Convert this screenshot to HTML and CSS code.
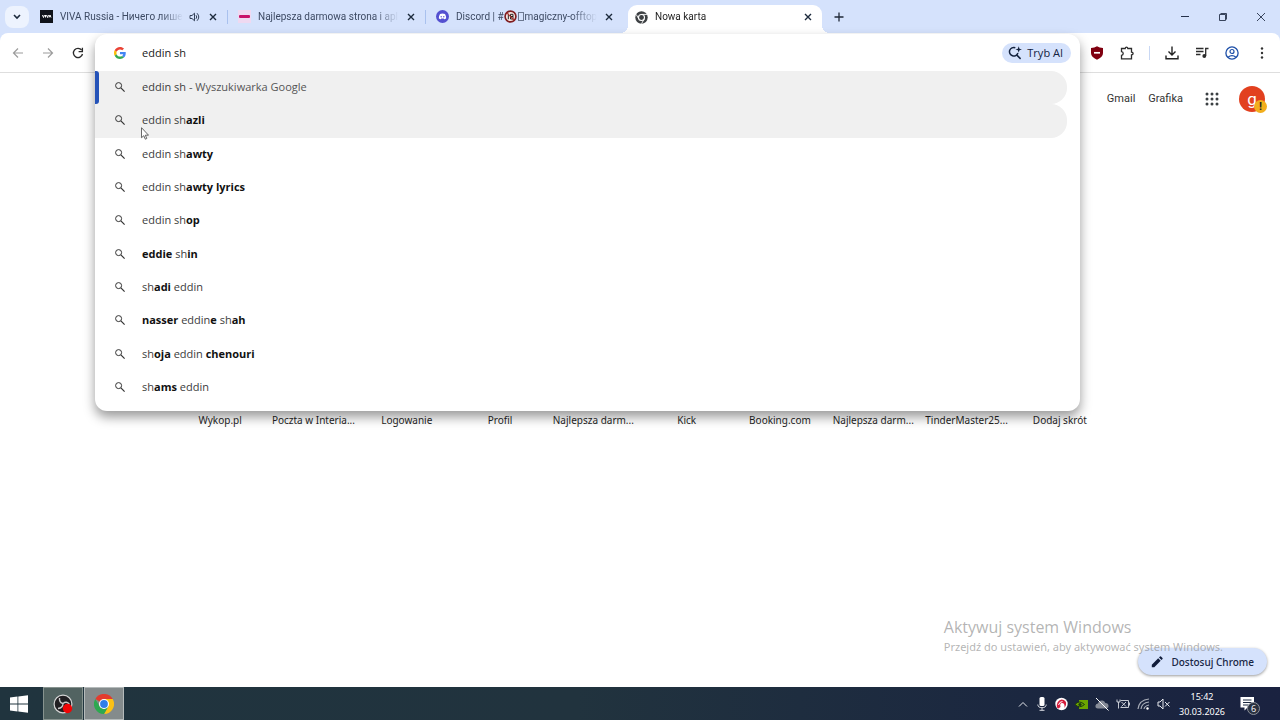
FILE: index.html
```html
<!DOCTYPE html>
<html lang="pl">
<head>
    <meta charset="UTF-8">
    <meta name="viewport" content="width=device-width, initial-scale=1.0">
    <title>Nowa karta</title>
    <link rel="stylesheet" href="styles.css">
</head>
<body>
    <svg class="defs" width="0" height="0">
        <symbol id="close" viewBox="0 0 8 8"><path d="M1 1l6 6M7 1L1 7" stroke="currentColor" stroke-width="1.4" fill="none"/></symbol>
        <symbol id="search" viewBox="0 0 12 12"><circle cx="4.6" cy="4.6" r="3" fill="none" stroke="#333" stroke-width="1"/><path d="M6.9 6.9L10.6 10.6" stroke="#333" stroke-width="1.2"/></symbol>
        <symbol id="chrome" viewBox="0 0 20 20">
            <path d="M10 10L1.3 5A10 10 0 0 1 18.7 5z" fill="#e33b2e"/>
            <path d="M10 5h8.7A10 10 0 0 1 10 20l4.3-7.5z" fill="#fbc116"/>
            <path d="M1.3 5l4.4 7.5 4.3 2.5L14.3 12.5 10 20A10 10 0 0 1 1.3 5z" fill="#2da94f"/>
            <circle cx="10" cy="10" r="5" fill="#fff"/>
            <circle cx="10" cy="10" r="3.9" fill="#2f7de9"/>
        </symbol>
    </svg>

    <header class="tab-strip">
        <button class="tab-search" aria-label="Szukaj kart">
            <svg width="8" height="6" viewBox="0 0 8 6"><path d="M1 1l3 3 3-3" fill="none" stroke="#1c2a3c" stroke-width="1.6"/></svg>
        </button>
        <div class="tab">
            <svg class="favicon" viewBox="0 0 13 13"><rect width="13" height="13" fill="#10131a"/><path d="M2.5 5l1 2.5 1-2.5M5.5 5v2.5M6.5 5l1 2.5 1-2.5M9 7.5l1-2.5 1 2.5" stroke="#fff" stroke-width="1" fill="none"/></svg>
            <span class="tab-title">VIVA Russia - Ничего лише</span>
            <svg class="sound" width="11" height="10" viewBox="0 0 11 10"><path d="M1 3.5h2L5.5 1.2v7.6L3 6.5H1z" fill="none" stroke="#34425a"/><path d="M7 3.2q1.5 1.8 0 3.6M8 1.2q3.5 3.8 0 7.6" fill="none" stroke="#34425a"/></svg>
            <button class="tab-close" aria-label="Zamknij"><svg width="8" height="8"><use href="#close"/></svg></button>
        </div>
        <div class="tab">
            <svg class="favicon" viewBox="0 0 13 13"><rect width="13" height="13" fill="#efd9f1"/><rect x="1" y="5" width="11" height="3" rx="1" fill="#c8126a"/></svg>
            <span class="tab-title">Najlepsza darmowa strona i apl</span>
            <button class="tab-close" aria-label="Zamknij"><svg width="8" height="8"><use href="#close"/></svg></button>
        </div>
        <div class="tab">
            <svg class="favicon" viewBox="0 0 13 13"><circle cx="6.5" cy="6.5" r="6.5" fill="#5450d0"/><path d="M4 4q2.5-.8 5 0 1.3 2.2 1.2 4.3-1 .9-1.9.9L7.7 8.5H5.3l-.6.7q-.9 0-1.9-.9Q2.7 6.2 4 4z" fill="#fff"/><circle cx="5.2" cy="6.7" r=".7" fill="#5450d0"/><circle cx="7.8" cy="6.7" r=".7" fill="#5450d0"/></svg>
            <span class="tab-title">Discord | #<svg class="emoji" width="13" height="13" viewBox="0 0 12 12"><circle cx="6" cy="6" r="5" fill="#f6e4e0" stroke="#7e1d20" stroke-width="1.5"/><path d="M4 3.5v5M6 4h2.3v2H6zM6 6h2.3v2.3H6z" fill="none" stroke="#222" stroke-width=".9"/><path d="M2.5 2.5l7 7" stroke="#b3302c"/></svg><span class="missing-glyph"></span>magiczny-offtop</span>
            <button class="tab-close" aria-label="Zamknij"><svg width="8" height="8"><use href="#close"/></svg></button>
        </div>
        <div class="tab active">
            <svg class="favicon" viewBox="0 0 13 13"><circle cx="6.5" cy="6.5" r="6.2" fill="#3d4043"/><circle cx="6.5" cy="6.5" r="3" fill="#3d4043" stroke="#fff" stroke-width="1.1"/><path d="M6.5 3.4H12M3.8 8L1.2 3.4M9.2 8L6.5 12.7" stroke="#fff" stroke-width=".9"/></svg>
            <span class="tab-title">Nowa karta</span>
            <button class="tab-close" aria-label="Zamknij"><svg width="8" height="8"><use href="#close"/></svg></button>
        </div>
        <button class="new-tab" aria-label="Nowa karta"><svg width="10" height="10" viewBox="0 0 10 10"><path d="M5 .5v9M.5 5h9" stroke="#1f2937" stroke-width="1.3"/></svg></button>
        <div class="window-buttons">
            <button aria-label="Minimalizuj"><svg width="10" height="10" viewBox="0 0 10 10"><path d="M1 4.5h8" stroke="#26324a"/></svg></button>
            <button aria-label="Maksymalizuj"><svg width="10" height="10" viewBox="0 0 10 10"><path d="M1.5 2.5h6v6h-6zM2.5 1.5h6v6" fill="none" stroke="#26324a" stroke-width=".9"/></svg></button>
            <button aria-label="Zamknij okno"><svg width="10" height="10" viewBox="0 0 10 10"><path d="M1 1l8 8M9 1L1 9" stroke="#26324a" stroke-width=".9"/></svg></button>
        </div>
    </header>

    <div class="toolbar">
        <nav class="nav-buttons">
            <button aria-label="Wstecz"><svg width="12" height="12" viewBox="0 0 12 12"><path d="M11 6H1.5M6 1.5L1.5 6 6 10.5" fill="none" stroke="#9c9c9c" stroke-width="1.2"/></svg></button>
            <button aria-label="Dalej"><svg width="12" height="12" viewBox="0 0 12 12"><path d="M1 6h9.5M6 1.5L10.5 6 6 10.5" fill="none" stroke="#9c9c9c" stroke-width="1.2"/></svg></button>
            <button aria-label="Odśwież"><svg width="12" height="12" viewBox="0 0 12 12"><path d="M9.7 3.2A4.6 4.6 0 1 0 10.5 7" fill="none" stroke="#2a2a2a" stroke-width="1.3"/><path d="M10.4.8v3.8H6.6" fill="none" stroke="#2a2a2a" stroke-width="1.3"/></svg></button>
        </nav>
        <div class="omnibox-slot">
            <div class="omnibox">
                <div class="address">
                    <svg width="12" height="12" viewBox="0 0 48 48"><path fill="#ea4335" d="M24 9.5c3.54 0 6.71 1.22 9.21 3.6l6.85-6.85C35.9 2.38 30.47 0 24 0 14.62 0 6.51 5.38 2.56 13.22l7.98 6.19C12.43 13.72 17.74 9.5 24 9.5z"/><path fill="#4285f4" d="M46.98 24.55c0-1.57-.15-3.09-.38-4.55H24v9.02h12.94c-.58 2.96-2.26 5.48-4.78 7.18l7.73 6c4.51-4.18 7.09-10.36 7.09-17.65z"/><path fill="#fbbc05" d="M10.53 28.59c-.48-1.45-.76-2.99-.76-4.59s.27-3.14.76-4.59l-7.98-6.19C.92 16.46 0 20.12 0 24c0 3.88.92 7.54 2.56 10.78l7.97-6.19z"/><path fill="#34a853" d="M24 48c6.48 0 11.93-2.13 15.89-5.81l-7.73-6c-2.15 1.45-4.92 2.3-8.16 2.3-6.26 0-11.57-4.22-13.47-9.91l-7.98 6.19C6.51 42.62 14.62 48 24 48z"/></svg>
                    <input class="query" type="text" value="eddin sh" aria-label="Pasek adresu i wyszukiwania">
                    <button class="ai-mode">
                        <svg width="14" height="14" viewBox="0 0 14 14"><path d="M7.3 1.7A4.3 4.3 0 1 0 9.9 7M8.6 8.9l4 4" fill="none" stroke="#14233f" stroke-width="1.5"/><path d="M10.7.3l.8 2.4 2.4.8-2.4.8-.8 2.4-.8-2.4-2.4-.8 2.4-.8z" fill="#14233f"/></svg>
                        Tryb AI
                    </button>
                </div>
                <ul class="suggestions">
                    <li class="selected"><svg width="12" height="12"><use href="#search"/></svg><span>eddin sh <i>- Wyszukiwarka Google</i></span></li>
                    <li class="hover"><svg width="12" height="12"><use href="#search"/></svg><span>eddin sh<b>azli</b></span></li>
                    <li><svg width="12" height="12"><use href="#search"/></svg><span>eddin sh<b>awty</b></span></li>
                    <li><svg width="12" height="12"><use href="#search"/></svg><span>eddin sh<b>awty lyrics</b></span></li>
                    <li><svg width="12" height="12"><use href="#search"/></svg><span>eddin sh<b>op</b></span></li>
                    <li><svg width="12" height="12"><use href="#search"/></svg><span><b>eddie</b> sh<b>in</b></span></li>
                    <li><svg width="12" height="12"><use href="#search"/></svg><span>sh<b>adi</b> eddin</span></li>
                    <li><svg width="12" height="12"><use href="#search"/></svg><span><b>nasser</b> eddin<b>e</b> sh<b>ah</b></span></li>
                    <li><svg width="12" height="12"><use href="#search"/></svg><span>sh<b>oja</b> eddin <b>chenouri</b></span></li>
                    <li><svg width="12" height="12"><use href="#search"/></svg><span>sh<b>ams</b> eddin</span></li>
                </ul>
            </div>
        </div>
        <div class="extensions">
            <button aria-label="uBlock"><svg width="14" height="14" viewBox="0 0 14 14"><path d="M7 .3q2.5 1.7 6 1.7v5q0 4-6 6.7Q1 11 1 7V2Q4.5 2 7 .3z" fill="#800010"/><path d="M4 6.8h6" stroke="#fff" stroke-width="1.7"/></svg></button>
            <button aria-label="Rozszerzenia"><svg width="14" height="14" viewBox="0 0 14 14"><path d="M1.5 2.5h3.7q.2-1.3 1.3-1.3t1.3 1.3h3.7v3.7q1.6.1 1.6 1.3t-1.6 1.3v4h-10V9.3q1.7-.2 1.7-1.8T1.5 5.7z" fill="none" stroke="#2c2c2c" stroke-width="1.3"/></svg></button>
            <span class="divider"></span>
            <button aria-label="Pobrane"><svg width="14" height="14" viewBox="0 0 14 14"><path d="M7 .5v8M3.5 5.5L7 9l3.5-3.5M1 9.5v3.3h12V9.5" fill="none" stroke="#222" stroke-width="1.4"/></svg></button>
            <button aria-label="Multimedia"><svg width="14" height="14" viewBox="0 0 14 14"><path d="M1 2.5h7.5M1 5.5h7.5M1 8.5h4.5M10.7 10V2.5h2.8" fill="none" stroke="#2c2c2c" stroke-width="1.3"/><circle cx="9.3" cy="10" r="1.9" fill="#2c2c2c"/></svg></button>
            <button aria-label="Profil"><svg width="14" height="14" viewBox="0 0 14 14"><circle cx="7" cy="7" r="6.1" fill="none" stroke="#1d4fa8" stroke-width="1.3"/><circle cx="7" cy="5.5" r="2" fill="none" stroke="#1d4fa8" stroke-width="1.2"/><path d="M3 11.2q4-3.3 8 0" fill="none" stroke="#1d4fa8" stroke-width="1.3"/></svg></button>
            <button aria-label="Menu"><svg width="14" height="14" viewBox="0 0 14 14"><g fill="#333"><circle cx="7" cy="2.5" r="1.2"/><circle cx="7" cy="7" r="1.2"/><circle cx="7" cy="11.5" r="1.2"/></g></svg></button>
        </div>
    </div>

    <main class="page">
        <div class="google-bar">
            <a href="#">Gmail</a>
            <a href="#">Grafika</a>
            <button class="apps" aria-label="Aplikacje Google"><svg width="14" height="14" viewBox="0 0 14 14"><g fill="#3c4043"><circle cx="2" cy="2" r="1.5"/><circle cx="7" cy="2" r="1.5"/><circle cx="12" cy="2" r="1.5"/><circle cx="2" cy="7" r="1.5"/><circle cx="7" cy="7" r="1.5"/><circle cx="12" cy="7" r="1.5"/><circle cx="2" cy="12" r="1.5"/><circle cx="7" cy="12" r="1.5"/><circle cx="12" cy="12" r="1.5"/></g></svg></button>
            <button class="avatar" aria-label="Konto Google">g<span class="warning">!</span></button>
        </div>
        <div class="shortcuts">
            <a href="#">Wykop.pl</a>
            <a href="#">Poczta w Interia...</a>
            <a href="#">Logowanie</a>
            <a href="#">Profil</a>
            <a href="#">Najlepsza darm...</a>
            <a href="#">Kick</a>
            <a href="#">Booking.com</a>
            <a href="#">Najlepsza darm...</a>
            <a href="#">TinderMaster25...</a>
            <a href="#">Dodaj skrót</a>
        </div>
        <button class="customize">
            <svg width="12" height="12" viewBox="0 0 12 12"><path d="M.8 11.2V8.7L7.2 2.3l2.5 2.5-6.4 6.4zM8 1.5L9 .5q.5-.4 1 0L11.5 2q.4.5 0 1l-1 1z" fill="#101c3a"/></svg>
            Dostosuj Chrome
        </button>
        <div class="activation">
            <p class="activation-title">Aktywuj system Windows</p>
            <p>Przejdź do ustawień, aby aktywować system Windows.</p>
        </div>
    </main>

    <footer class="taskbar">
        <button class="start" aria-label="Start"><svg width="18" height="18" viewBox="0 0 18 18"><path d="M0 2.6l7.5-1v7H0zM8.3 1.5L18 .2v8.4H8.3zM0 9.4h7.5v7L0 15.4zM8.3 9.4H18v8.4l-9.7-1.3z" fill="#fff"/></svg></button>
        <button class="app" aria-label="OBS"><svg width="20" height="20" viewBox="0 0 20 20"><circle cx="10" cy="10" r="8.9" fill="#211f22" stroke="#d4d4d4" stroke-width="1.2"/><path d="M10 9.5Q6 8.5 6.5 4M10 9.5q3.5-3 6.5 1M10 9.5Q10 14 5 14.5" fill="none" stroke="#c9c9c9" stroke-width="1.4"/><circle cx="14.5" cy="14.5" r="4.7" fill="#f00505"/></svg></button>
        <button class="app current" aria-label="Chrome"><svg width="20" height="20"><use href="#chrome"/></svg></button>
        <div class="tray">
            <svg width="12" height="14" viewBox="0 0 12 14"><path d="M2 9.5l4-4 4 4" fill="none" stroke="#e6e8ee"/></svg>
            <svg width="12" height="14" viewBox="0 0 12 14"><rect x="3.5" y="0" width="5" height="9" rx="1.5" fill="#fff"/><path d="M1.8 7.5q0 3.2 4.2 3.2t4.2-3.2M6 10.5v3M3.5 13.3h5" fill="none" stroke="#d5d8df"/></svg>
            <svg width="13" height="14" viewBox="0 0 13 14"><circle cx="6.5" cy="7" r="6.2" fill="#fff"/><path d="M2 10.5Q1 4 6.5 2.5 12 3 11 8l-1.5 3q.5-5-2.5-5-2.5 0-1.5 4l-2 1.5z" fill="#d51b3b"/><path d="M3.5 8q1-3.5 4-3.5" fill="none" stroke="#fff"/></svg>
            <svg width="13" height="14" viewBox="0 0 13 14"><path d="M4 3h9v9H4z" fill="#6ca500"/><path d="M0 7.5Q4 2.5 9.5 7.5 4.5 12 0 7.5z" fill="#6ca500" stroke="#1d3910"/><circle cx="5" cy="7.5" r="1.6" fill="#1d3910"/></svg>
            <svg width="14" height="14" viewBox="0 0 14 14"><path d="M3 11.5q-3-.2-2.5-3Q1 6.5 3 6.5 4 3 7.5 3.5q2 .3 2.8 2.5 3.2.2 3.2 3 0 2.5-3 2.5z" fill="#878c98"/><path d="M1 1l12.5 12.5" stroke="#fff"/></svg>
            <svg width="14" height="14" viewBox="0 0 14 14"><path d="M4.5 3.5h8v7h-8M13.5 5.5v3M1 2.5v2.5h3V2.5M2.5 5v6.5M5.5 5l4.5 4.5M10 5L5.5 9.5" fill="none" stroke="#d9dce3" stroke-width=".9"/></svg>
            <svg width="13" height="14" viewBox="0 0 13 14"><path d="M1 12Q2 3 12 2M4 12q.5-6 8-7M7 12q.5-3 5-4" fill="none" stroke="#a8adb8" stroke-width="1.2"/><circle cx="10.5" cy="11.5" r="1.2" fill="#fff"/></svg>
            <svg width="14" height="14" viewBox="0 0 14 14"><path d="M1 5h2l3-3v10L3 9H1zM8 5l4.5 4.5M12.5 5L8 9.5" fill="none" stroke="#e6e8ee"/></svg>
        </div>
        <time class="clock"><span>15:42</span><span>30.03.2026</span></time>
        <button class="notifications" aria-label="Powiadomienia">
            <svg width="15" height="15" viewBox="0 0 15 15"><path d="M.5 1h13.5v10.5H7.5L4.5 14.5v-3h-4z" fill="#fff"/><path d="M3 4h8.5M3 6.5h8.5M3 9h5" stroke="#1b2840"/></svg>
            <span class="count">6</span>
        </button>
    </footer>

    <svg class="cursor" width="8" height="13" viewBox="0 0 8 13"><path d="M.5.7v10l2.3-2 1.5 3.5 1.5-.7L4.3 8.2h3.2z" fill="#fff" stroke="#444" stroke-width=".8"/></svg>
</body>
</html>
```
FILE: styles.css
```css
* {
    box-sizing: border-box;
}
body {
    margin: 0;
    height: 100vh;
    display: flex;
    flex-direction: column;
    font-family: "Open Sans", "Noto Sans", sans-serif;
    font-size: 11px;
    line-height: 16px;
    color: #1f1f1f;
    background-color: #d5e2fc;
    overflow: hidden;
}
button {
    display: flex;
    align-items: center;
    justify-content: center;
    padding: 0;
    border: none;
    background: none;
    font: inherit;
    color: inherit;
    cursor: pointer;
}
a {
    color: inherit;
    text-decoration: none;
}
svg {
    display: block;
    flex: none;
}
.defs {
    position: absolute;
}

/* tabs */
.tab-strip {
    display: flex;
    height: 33px;
    padding-left: 5px;
}
.tab-search {
    width: 24px;
    height: 22px;
    margin: 6px 1px 0 0;
    border-radius: 8px;
    background-color: #edf3fe;
}
.tab {
    position: relative;
    display: flex;
    align-items: center;
    flex: 0 1 198px;
    min-width: 0;
    padding: 0 7px 0 10px;
    color: #3d4a63;
    font-family: Roboto, "Open Sans", sans-serif;
    font-size: 10px;
}
.tab:not(.active)::after {
    content: "";
    position: absolute;
    right: 0;
    width: 1px;
    height: 14px;
    background-color: #a9c1ee;
}
.tab:nth-child(4)::after {
    display: none;
}
.favicon {
    width: 13px;
    height: 13px;
    margin-right: 7px;
}
.tab-title {
    flex: 1;
    min-width: 0;
    overflow: hidden;
    white-space: nowrap;
    -webkit-mask-image: linear-gradient(to right, #000 82%, transparent);
    mask-image: linear-gradient(to right, #000 82%, transparent);
}
.emoji {
    display: inline-block;
    vertical-align: -3px;
}
.missing-glyph {
    display: inline-block;
    width: 6px;
    height: 9px;
    margin: 0 1px;
    border: 1px solid #6c7890;
    vertical-align: -1px;
}
.sound {
    margin: 0 5px 0 6px;
}
.tab-close {
    width: 16px;
    height: 16px;
    margin-left: 4px;
    color: #1c2a3c;
}
.sound + .tab-close {
    margin-left: 0;
}
.tab.active {
    margin: 5px 0 0 4px;
    flex-basis: 194px;
    padding: 0 6px 4px 7px;
    border-radius: 9px 9px 0 0;
    background-color: #fff;
    color: #1f1f1f;
}
.tab.active::before,
.tab.active::after {
    content: "";
    position: absolute;
    bottom: 0;
    width: 8px;
    height: 8px;
}
.tab.active::before {
    left: -8px;
    background: radial-gradient(circle at 0 0, transparent 8px, #fff 8px);
}
.tab.active::after {
    right: -8px;
    background: radial-gradient(circle at 100% 0, transparent 8px, #fff 8px);
}
.new-tab {
    width: 34px;
}
.window-buttons {
    display: flex;
    margin-left: auto;
}
.window-buttons button {
    width: 38px;
}

/* toolbar */
.toolbar {
    display: flex;
    height: 40px;
    background-color: #fff;
    border-bottom: 1px solid #dedede;
    border-radius: 8px 8px 0 0;
}
.nav-buttons {
    display: flex;
    align-items: center;
    width: 95px;
    padding: 0 2px 0 3px;
}
.nav-buttons button {
    width: 30px;
    height: 30px;
}
.omnibox-slot {
    position: relative;
    flex: 1;
}
.omnibox {
    position: absolute;
    top: 1px;
    left: 0;
    right: 0;
    z-index: 2;
    padding-bottom: 7px;
    border-radius: 12px;
    background-color: #fff;
    box-shadow: 0 6px 12px rgba(0, 0, 0, 0.4);
    overflow: hidden;
}
.address {
    display: flex;
    align-items: center;
    height: 37px;
    padding: 0 9px 0 19px;
}
.query {
    flex: 1;
    min-width: 0;
    margin-left: 16px;
    padding: 0;
    border: none;
    outline: none;
    background: none;
    font: inherit;
    color: #202020;
}
.ai-mode {
    gap: 5px;
    height: 20px;
    padding: 0 8px 0 6px;
    border-radius: 10px;
    background-color: #d5e2fc;
    color: #14233f;
    font-weight: 500;
}
.suggestions {
    display: grid;
    grid-auto-rows: 1fr;
    height: 333px;
    margin: 0;
    padding: 0 13px 0 0;
    list-style: none;
}
.suggestions li {
    position: relative;
    display: flex;
    align-items: center;
    gap: 16px;
    padding: 0 0 1px 19px;
    border-radius: 0 16px 16px 0;
    color: #3c3c3c;
}
.suggestions i {
    font-style: normal;
    color: #555;
}
.suggestions b {
    font-weight: 700;
    color: #111;
}
.suggestions .selected,
.suggestions .hover {
    background-color: #f0f0f0;
}
.suggestions .selected::before {
    content: "";
    position: absolute;
    left: 0;
    top: 0;
    bottom: 0;
    width: 4px;
    border-radius: 0 3px 3px 0;
    background-color: #2452b8;
}
.extensions {
    display: flex;
    align-items: center;
    width: 200px;
    padding-left: 2px;
}
.extensions button {
    width: 30px;
    height: 30px;
}
.divider {
    width: 1px;
    height: 14px;
    margin: 0 7px;
    background-color: #c9d8f4;
}

/* new tab page */
.page {
    position: relative;
    flex: 1;
    background-color: #fff;
}
.google-bar {
    display: flex;
    align-items: center;
    justify-content: flex-end;
    gap: 13px;
    padding: 13px 15px 0 0;
    font-family: Roboto, "Liberation Sans", sans-serif;
    color: #333;
}
.apps {
    width: 18px;
    height: 18px;
    margin: 0 5px 0 7px;
}
.avatar {
    position: relative;
    width: 26px;
    height: 26px;
    border-radius: 50%;
    background-color: #e2401f;
    color: #fff;
    font-size: 17px;
}
.warning {
    position: absolute;
    right: -2px;
    bottom: -1px;
    width: 13px;
    height: 13px;
    border-radius: 50%;
    background-color: #f2ae1c;
    color: #222;
    font-size: 11px;
    font-weight: 700;
    line-height: 13px;
}
.shortcuts {
    display: grid;
    grid-template-columns: repeat(10, 1fr);
    max-width: 933px;
    margin: 300px auto 0;
    font-family: "Noto Sans", "Open Sans", sans-serif;
    font-size: 10px;
    text-align: center;
    white-space: nowrap;
}
.customize {
    position: absolute;
    right: 13px;
    bottom: 12px;
    gap: 8px;
    height: 27px;
    padding: 0 13px;
    border-radius: 14px;
    background-color: #d5e2fc;
    box-shadow: 0 1px 3px rgba(0, 0, 0, 0.4);
    color: #182645;
    font-family: "Noto Sans", "Open Sans", sans-serif;
    font-size: 10px;
    font-weight: 500;
}
.activation {
    position: absolute;
    right: 57px;
    bottom: 30px;
    color: rgba(130, 130, 130, 0.6);
    font-family: "Noto Sans", "Open Sans", sans-serif;
    white-space: nowrap;
    pointer-events: none;
}
.activation p {
    margin: 0;
    line-height: 20px;
}
.activation .activation-title {
    font-family: "Open Sans", "Noto Sans", sans-serif;
    font-size: 16px;
}

/* taskbar */
.taskbar {
    display: flex;
    height: 33px;
    background: linear-gradient(to right, #20343e, #21333e 45%, #1b2740 80%, #1a2240);
    color: #fff;
}
.start {
    width: 38px;
}
.app {
    width: 40px;
    margin-left: 1px;
    border: 1px solid #87938f;
    background-color: #526361;
}
.start + .app {
    margin-left: 5px;
}
.app.current {
    background-color: #848b8c;
    border-color: #b5bbbb;
}
.tray {
    display: flex;
    align-items: center;
    gap: 7px;
    margin-left: auto;
}
.clock {
    display: flex;
    flex-direction: column;
    justify-content: center;
    width: 62px;
    font-family: "Noto Sans", "Open Sans", sans-serif;
    font-size: 9px;
    line-height: 15px;
    text-align: center;
}
.notifications {
    position: relative;
    width: 47px;
    padding-right: 18px;
}
.count {
    position: absolute;
    left: 14px;
    top: 15px;
    width: 13px;
    height: 13px;
    border: 1px solid #8d929c;
    border-radius: 50%;
    background-color: #2a3140;
    font-size: 9px;
    line-height: 11px;
}
.cursor {
    position: absolute;
    left: 141px;
    top: 127px;
    z-index: 3;
}
```
